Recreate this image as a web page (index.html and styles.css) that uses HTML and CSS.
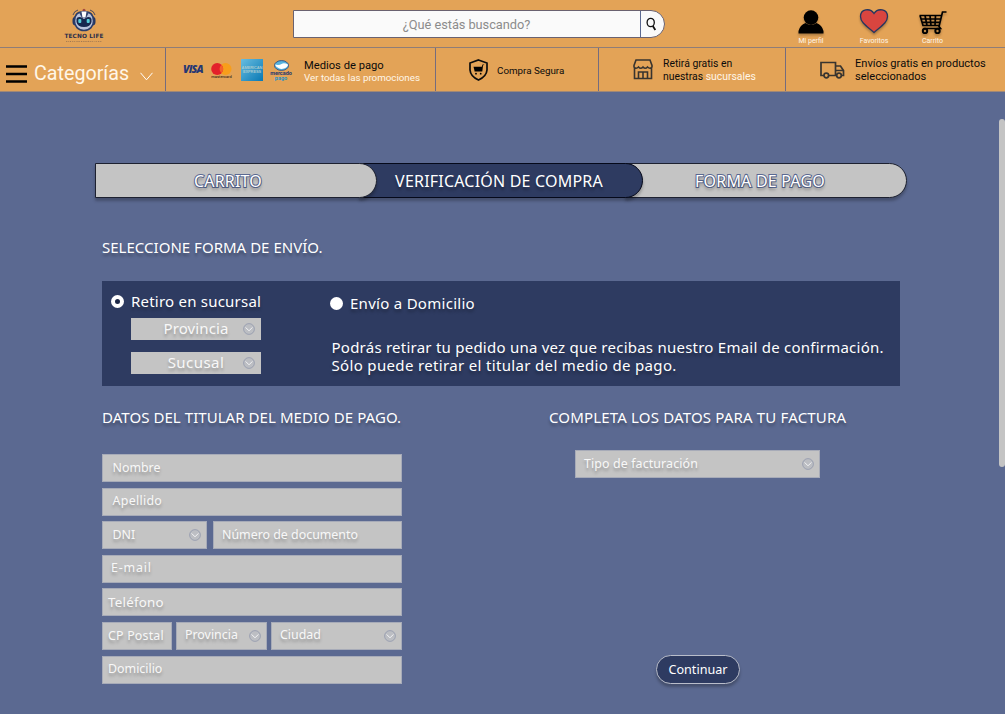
FILE: index.html
```html
<!DOCTYPE html>
<html lang="es">
<head>
<meta charset="utf-8">
<title>Tecno Life - Verificación de compra</title>
<link rel="stylesheet" href="styles.css">
</head>
<body>
<svg class="defs" width="0" height="0">
  <symbol id="chev" viewBox="0 0 12 12"><circle cx="6" cy="6" r="5.4" fill="#bcbec3" stroke="#8d94ab" stroke-width=".7"/><path d="M2.6 4.4 6 7.8 9.4 4.400" fill="none" stroke="#f4f4f6" stroke-width="1"/></symbol>
</svg>
<header class="top">
  <div class="logo">
    <svg width="28" height="24" viewBox="0 0 28 24">
      <path d="M3 7Q4 3 8 2M5 9Q6 5 9 4M25 7Q24 3 20 2M23 9Q22 5 19 4" fill="none" stroke="#4c4a5c" stroke-width="1"/>
      <circle cx="14" cy="2.2" r="1.5" fill="#a5483e"/>
      <rect x="2.500" y="8.500" width="23" height="9" rx="3.500" fill="#253763"/>
      <path d="M14 3.500C7 3.500 4.500 8 4.500 13S8 22.500 14 22.500 23.500 18 23.500 13 21 3.500 14 3.500Z" fill="#b9c3dc" stroke="#2c3d68" stroke-width="1.500"/>
      <path d="M9 4.500 12 10H16L19 4.500Q14 2.500 9 4.500Z" fill="#34466f"/>
      <path d="M11.500 3.500h5l-1 6h-3z" fill="#fff"/>
      <path d="M6.500 11Q7 8.500 11 9.300L14 11 17 9.300Q21 8.500 21.500 11V14Q20.500 19 14 19T6.500 14Z" fill="#17284f"/>
      <rect x="8.300" y="11" width="3" height="4" rx="1" fill="#55ced9"/><rect x="16.700" y="11" width="3" height="4" rx="1" fill="#55ced9"/>
    </svg>
    <b class="brand">TECNO LIFE</b><span class="tag">ELECTRODOMÉSTICOS</span>
  </div>
  <div class="search"><span class="query">¿Qué estás buscando?</span>
    <span class="lens"><svg width="12" height="15" viewBox="0 0 12 15"><ellipse cx="4.700" cy="5.500" rx="3.600" ry="4.200" fill="none" stroke="#111" stroke-width="1.300"/><path d="M6.800 9 9.300 13" stroke="#111" stroke-width="1.800"/></svg></span>
  </div>
  <div class="actions">
    <div class="action"><svg class="ico" width="26" height="25" viewBox="0 0 26 25"><circle cx="13" cy="8.600" r="7.300"/><path d="M.5 24.500V22Q2 16 7.500 14Q13 18 18.500 14Q24 16 25.500 22V24.500Z"/></svg><span>Mi perfil</span></div>
    <div class="action"><svg class="ico" width="30" height="25" viewBox="0 0 30 25"><path d="M15 23.500C9 18 1.500 14 1.500 7.500C1.500 0 11 -1.500 15 4.500C19 -1.500 28.500 0 28.500 7.500C28.500 14 21 18 15 23.500Z" fill="#d9453f" stroke="#26365f" stroke-width="1.300"/></svg><span>Favoritos</span></div>
    <div class="action"><svg class="ico" width="28" height="25" viewBox="0 0 28 25" fill="none" stroke="#000" stroke-width="1.700"><path d="M27.500 3H23.500L20 17.500 21.500 19.500H4.500M.5 6.500H22.500M1 6.500 4 16.500H20M2.500 10H21.500M3.500 13.300H20.800M6 6.500 8 16.500M11 6.500 12 16.500M16.500 6.500 16 16.500"/><circle cx="6" cy="22" r="2.200" stroke-width="2"/><circle cx="18.500" cy="22" r="2.200" stroke-width="2"/></svg><span>Carrito</span></div>
  </div>
</header>
<nav class="nav">
  <div class="cell cats">
    <svg width="21" height="18" viewBox="0 0 21 18"><path d="M0 1.500H21M0 9H21M0 16.500H21" stroke="#000" stroke-width="2.600"/></svg>
    <span class="cat-label">Categorías</span>
    <svg class="cat-chev" width="13" height="9" viewBox="0 0 13 9"><path d="M.5.8 6.500 7.800 12.500.8" fill="none" stroke="#fff"/></svg>
  </div>
  <div class="cell pay">
    <span class="visa">VISA</span>
    <span class="mc"><svg width="21" height="12" viewBox="0 0 21 12"><circle cx="14.500" cy="6" r="6" fill="#f79e1b"/><circle cx="6.200" cy="6" r="6" fill="#e3202a"/><path d="M10.400 1.700A6 6 0 0 1 10.400 10.300A6 6 0 0 1 10.400 1.700Z" fill="#f4622a"/></svg><i>mastercard</i></span>
    <span class="amex"><i>AMERICAN</i><i>EXPRESS</i></span>
    <span class="mp"><svg width="15" height="11" viewBox="0 0 15 11"><ellipse cx="7.500" cy="5.500" rx="7" ry="4.900" fill="#58b4df" stroke="#24437c" stroke-width=".8"/><path d="M1 4.500Q5 5.500 7.500 4T14 4.500Q14 7 10 8.500Q7 9.500 4.500 8Q1.500 6.500 1 4.500Z" fill="#fff"/></svg><i class="m1">mercado</i><i class="m2">pago</i></span>
    <p class="pay-text"><span>Medios de pago</span><span class="light">Ver todas las promociones</span></p>
  </div>
  <div class="cell safe">
    <svg width="19" height="22" viewBox="0 0 19 22"><path d="M9.500 1 18 4V11Q17.500 17.500 9.500 21Q1.500 17.500 1 11V4Z" fill="none" stroke="#0c0c0c" stroke-width="1.700"/><path d="M15.500 5.500 14 6.500 13.300 12.500H5.500V11.700L4.500 7.700H12.800L13.500 5.500Z"/><circle cx="7" cy="14.700" r=".9"/><circle cx="11.700" cy="14.700" r=".9"/></svg>
    <span>Compra Segura</span>
  </div>
  <div class="cell store">
    <svg width="20" height="21" viewBox="0 0 20 21" fill="none" stroke="#38342f" stroke-width="1.600"><path d="M3 1H17L19 6.500V8Q17 10.500 14.500 8Q12.300 10.500 10 8Q7.700 10.500 5.500 8Q3 10.500 1 8V6.500ZM1.500 9V19.500H18.500V9M5.500 19.500V13H14.500V19.500M10 13V19.500"/></svg>
    <p><span>Retirá gratis en</span><span>nuestras <em>sucursales</em></span></p>
  </div>
  <div class="cell ship">
    <svg width="25" height="18" viewBox="0 0 25 18" fill="none" stroke="#38342f" stroke-width="1.700"><path d="M4 14.500H1V1.500H15.500V14.500H9M15.500 5H20.500L23.500 9.500V14.500H21.500M15.500 9.500H23.500"/><circle cx="6.300" cy="14.500" r="2.300"/><circle cx="19" cy="14.500" r="2.300"/></svg>
    <p><span>Envíos gratis en productos</span><span>seleccionados</span></p>
  </div>
</nav>
<main class="page">
  <ol class="steps">
    <li class="step s1"><span>CARRITO</span></li>
    <li class="step s2"><span>VERIFICACIÓN DE COMPRA</span></li>
    <li class="step s3"><span>FORMA DE PAGO</span></li>
  </ol>
  <h2 class="h h-ship">SELECCIONE FORMA DE ENVÍO.</h2>
  <section class="card">
    <div class="pickup">
      <label class="radio"><i class="dot on"></i><span class="t-ret">Retiro en sucursal</span></label>
      <div class="sel"><span class="t-prov">Provincia</span><svg class="cv"><use href="#chev"/></svg></div>
      <div class="sel"><span class="t-suc">Sucusal</span><svg class="cv"><use href="#chev"/></svg></div>
    </div>
    <div class="delivery">
      <label class="radio"><i class="dot"></i><span class="t-env">Envío a Domicilio</span></label>
      <p class="note"><span class="n1">Podrás retirar tu pedido una vez que recibas nuestro Email de confirmación.</span><span class="n2">Sólo puede retirar el titular del medio de pago.</span></p>
    </div>
  </section>
  <div class="cols">
    <section class="holder">
      <h2 class="h h-data">DATOS DEL TITULAR DEL MEDIO DE PAGO.</h2>
      <div class="form">
        <div class="row"><div class="f p10"><span class="w-nom">Nombre</span></div></div>
        <div class="row"><div class="f p10"><span class="w-ape">Apellido</span></div></div>
        <div class="row r-dni"><div class="f p10"><span class="w-dni">DNI</span><svg class="cv"><use href="#chev"/></svg></div><div class="f p8"><span class="w-num">Número de documento</span></div></div>
        <div class="row"><div class="f p8"><span class="w-mail">E-mail</span></div></div>
        <div class="row"><div class="f p5 tel"><span class="w-tel">Teléfono</span></div></div>
        <div class="row r-cp"><div class="f p5 tel"><span class="w-cp">CP Postal</span></div><div class="f p8"><span class="w-prv">Provincia</span><svg class="cv"><use href="#chev"/></svg></div><div class="f p8"><span class="w-ciu">Ciudad</span><svg class="cv"><use href="#chev"/></svg></div></div>
        <div class="row"><div class="f p5"><span class="w-dom">Domicilio</span></div></div>
      </div>
    </section>
    <section class="invoice">
      <h2 class="h h-inv">COMPLETA LOS DATOS PARA TU FACTURA</h2>
      <div class="f p8 tipo"><span class="w-tipo">Tipo de facturación</span><svg class="cv"><use href="#chev"/></svg></div>
      <button class="go">Continuar</button>
    </section>
  </div>
</main>
<div class="scroll"></div>
</body>
</html>
```
FILE: styles.css
```css
* { box-sizing: border-box; }
body { margin: 0; width: 1005px; height: 714px; overflow: hidden; position: relative; background: #5b6991; color: #fff; font-family: "Noto Sans", sans-serif; }
p, h2, ol { margin: 0; padding: 0; }
i, em { font-style: normal; }
svg { display: block; flex: none; }
span { white-space: nowrap; }
.defs { position: absolute; }

.top { height: 48px; background: #e3a357; border-bottom: 1px solid #8f7d78; display: flex; font-family: Roboto, sans-serif; }
.logo { width: 168px; padding-top: 8px; display: flex; flex-direction: column; align-items: center; color: #292c4a; }
.brand { font: 700 5.800px/7px "DejaVu Sans", sans-serif; letter-spacing: .15px; margin-top: 1px; white-space: nowrap; }
.tag { font-size: 2.500px; line-height: 3px; letter-spacing: .6px; opacity: .6; }
.search { margin: 10px 0 0 124.500px; width: 372px; height: 28px; display: flex; background: #fafafa; border: 1px solid #6a6270; border-radius: 0 14px 14px 0; }
.query { width: 347px; text-align: center; font-size: 12.800px; line-height: 27px; color: #8c8c8c; border-right: 1px solid #5b6991; letter-spacing: -.05px; }
.lens { padding: 6px 0 0 5px; }
.actions { margin-left: 122px; display: grid; grid-template-columns: 49px 77px 40px; padding-top: 9px; }
.action { display: flex; flex-direction: column; align-items: center; font-size: 7px; line-height: 8px; color: #fff6e8; }
.ico { filter: drop-shadow(0 2px 1px rgba(0,0,0,.25)); margin-bottom: 3px; }

.nav { height: 44px; background: #e3a357; display: grid; grid-template-columns: 166px 270px 163px 187px 219px; border-bottom: 1px solid #a18876; font-family: Roboto, sans-serif; color: #0b0b0b; }
.cell { display: flex; align-items: center; border-right: 1px solid #756c7e; font-size: 11px; line-height: 13px; }
.cell:last-child { border-right: 0; }
.cell p { display: flex; flex-direction: column; }
.cell em, .light { color: #fff6e8; }
.cats { padding: 8px 0 0 6px; }
.cat-label { font-size: 19.700px; line-height: 24px; margin: 0 11px 0 7px; color: #fff6e8; }
.cat-chev { margin-top: 5px; }
.pay { padding-left: 17px; }
.visa { width: 28px; font: italic 800 10.500px/13px "Open Sans", sans-serif; letter-spacing: -.8px; color: #263774; }
.mc { width: 21px; margin-top: 3px; display: block; }
.mc i { display: block; font-size: 4px; line-height: 4px; text-align: center; }
.amex { width: 22px; height: 22px; margin: 1px 0 0 9px; background: linear-gradient(135deg, #68bde0, #0878b4); display: flex; flex-direction: column; justify-content: center; font: 700 4px/4px "Liberation Sans", sans-serif; color: #a5c9cf; text-align: center; overflow: hidden; letter-spacing: -.1px; }
.mp { width: 22px; margin-left: 7px; display: flex; flex-direction: column; align-items: center; font: 700 5.500px/5px Roboto, sans-serif; margin-top: 1px; }
.m1 { color: #27396f; } .m2 { color: #2592c9; }
.pay-text { margin-left: 12px; margin-top: 3px; }
.pay-text span:first-child { font-size: 11.200px; }
.pay-text .light { font-size: 9.800px; line-height: 12px; letter-spacing: -.02px; }
.safe { padding-left: 33px; gap: 9px; font-size: 9.800px; padding-top: 1px; }
.store { padding-left: 34px; gap: 10px; font-size: 10.400px; }
.ship { padding-left: 34px; gap: 10px; font-size: 11.100px; }

.page { padding: 71px 0 0 102px; }
.steps { list-style: none; display: flex; margin-left: -7px; height: 35px; width: 813px; }
.step { height: 35px; border: 1px solid #1d2130; border-radius: 0 18px 18px 0; background: #c4c4c4; display: flex; justify-content: center; align-items: center; font-size: 16px; box-shadow: 0 3px 3px rgba(0,0,0,.25); position: relative; letter-spacing: .2px; }
.step span { text-shadow: 0 3px 3px rgba(0,0,0,.35); }
.s1 { width: 282px; z-index: 3; padding-right: 16px; }
.s2 { width: 284px; margin-left: -18px; z-index: 2; padding-right: 4px; background: #2e3b61; border-color: #05091a; }
.s3 { width: 282px; margin-left: -18px; z-index: 1; padding-right: 12px; }
.s1 span, .s3 span { -webkit-text-stroke: 2px #5b6991; paint-order: stroke fill; }
.h { position: relative; font-size: 15px; font-weight: 400; line-height: 20px; text-shadow: 0 3px 3px rgba(0,0,0,.3); white-space: nowrap; }
.h-ship { margin-top: 39px; letter-spacing: .02px; }
.h-data { letter-spacing: .06px; }
.h-inv { letter-spacing: .17px; }
.card { margin-top: 24px; width: 798px; height: 105px; background: #2e3b61; display: flex; padding-left: 9px; }
.pickup { width: 219px; padding-top: 10px; }
.radio { display: flex; align-items: center; height: 20px; gap: 7px; font-size: 15px; text-shadow: 0 3px 3px rgba(0,0,0,.3); }
.radio span { padding-bottom: 1px; letter-spacing: .22px; }
.radio .t-env { letter-spacing: .28px; }
.dot { width: 13px; height: 13px; border-radius: 50%; background: #fff; }
.dot.on { border: 4.500px solid #fff; background: #1c2746; }
.sel { position: relative; margin: 6.500px 0 0 20px; width: 130px; height: 22.500px; background: #c4c4c4; display: flex; align-items: center; justify-content: center; font-size: 15px; padding-bottom: 2px; color: #f8f8f8; text-shadow: 0 3px 3px rgba(0,0,0,.25); letter-spacing: .1px; }
.sel + .sel { margin-top: 11.500px; }
.t-suc { letter-spacing: .45px; }
.cv { position: absolute; right: 6px; top: 50%; margin-top: -6px; width: 12px; height: 12px; }
.f .cv { right: 5px; }
.delivery { padding-top: 12px; }
.note { margin: 25px 0 0 1.500px; display: flex; flex-direction: column; font-size: 15px; line-height: 18px; text-shadow: 0 3px 3px rgba(0,0,0,.3); letter-spacing: .24px; }
.n2 { letter-spacing: .34px; }
.cols { display: flex; margin-top: 21px; }
.holder { width: 447px; }
.form { margin-top: 27px; width: 300px; display: grid; gap: 5.600px; }
.row { display: grid; height: 28px; }
.r-dni { grid-template-columns: 105px 189px; gap: 6px; }
.r-cp { grid-template-columns: 70px 91px 131px; gap: 4px; }
.f { position: relative; height: 28px; background: #c4c4c4; border: 1px solid #a7abb8; display: flex; align-items: center; font-size: 12.400px; padding-bottom: 2px; color: #f8f8f8; text-shadow: 0 3px 3px rgba(0,0,0,.25); }
.p5 { padding-left: 5px; } .p8 { padding-left: 8px; } .p10 { padding-left: 9.500px; }
.tel { padding-bottom: 0; }
.w-ape { letter-spacing: .3px; }
.w-mail { letter-spacing: .85px; }
.w-tel { font-size: 13.300px; letter-spacing: .25px; }
.w-cp { letter-spacing: .2px; }
.w-tipo { letter-spacing: .12px; }
.tipo { width: 245px; margin: 23px 0 0 26px; }
.go { display: block; margin: 177px 0 0 107px; width: 84px; height: 29px; border-radius: 15px; border: 1px solid #b9bdca; background: #2e3b61; color: #fff; font: 12.600px/20px "Noto Sans", sans-serif; padding: 0; box-shadow: 0 3px 3px rgba(0,0,0,.25); }
.scroll { position: absolute; right: 0; top: 119px; width: 6px; height: 348px; border-radius: 3px; background: #c4c4c4; }
```
